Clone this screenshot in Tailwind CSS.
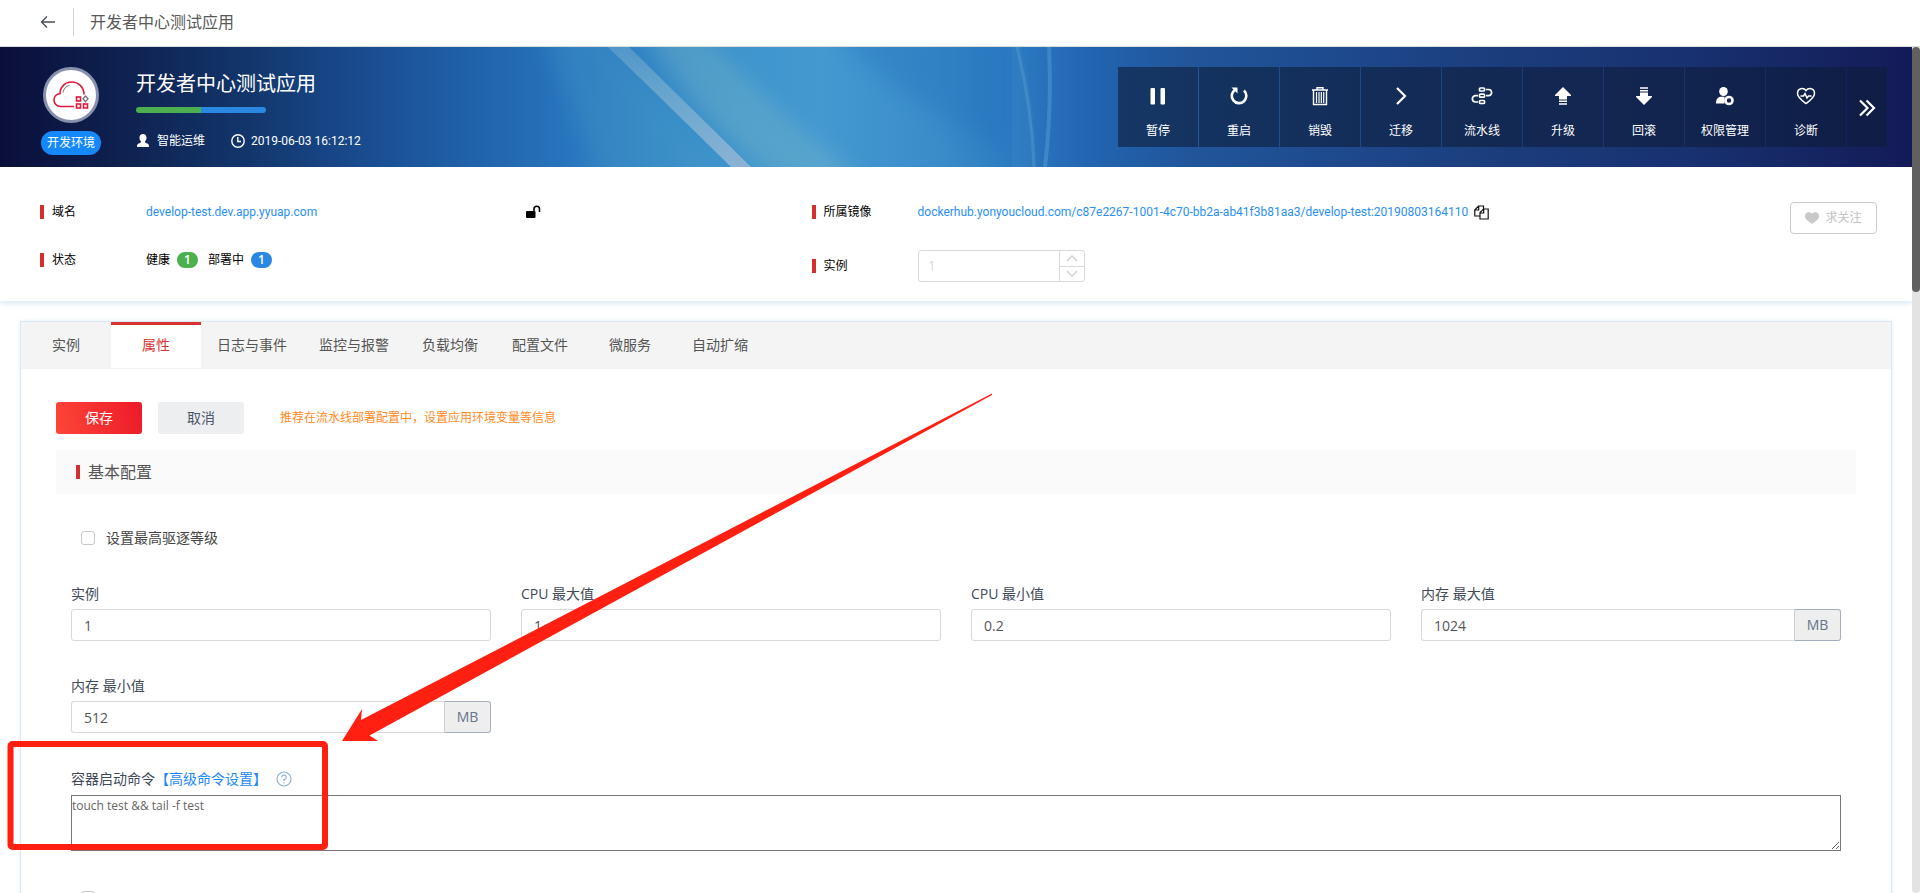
<!DOCTYPE html>
<html lang="zh-CN">
<head>
<meta charset="utf-8">
<meta name="viewport" content="width=device-width, initial-scale=1">
<title>开发者中心测试应用</title>
<script src="https://cdn.jsdelivr.net/npm/@tailwindcss/browser@4"></script>
</head>
<body class="h-screen overflow-hidden flex flex-col bg-white text-xs text-black font-['Open_Sans','Noto_Sans_CJK_SC',sans-serif]">

<header class="h-[47px] shrink-0 flex items-center pb-[2px] border-b border-[#dcdcdc] bg-white">
  <button type="button" aria-label="返回" class="ml-10 w-4 h-4">
    <svg viewBox="0 0 16 16" class="w-4 h-4" fill="none" stroke="#4a4f57" stroke-width="1.4"><path d="M15 8H1.5M7 2.5L1.5 8L7 13.5"/></svg>
  </button>
  <div class="ml-[17px] w-px h-7 bg-[#d4d4d4]"></div>
  <h1 class="ml-4 text-base leading-6 text-[#595959]">开发者中心测试应用</h1>
</header>

<div class="flex-1 min-h-0 flex">
<main class="flex-1 min-w-0 overflow-hidden relative">

  <!-- Application banner -->
  <section class="relative h-[120px] text-white bg-[linear-gradient(90deg,#0a0f3a_0%,#0f2352_7%,#12366b_13%,#18488a_18%,#1f5fa8_24%,#2876be_30%,#3489c7_35%,#3f95cd_39%,#4499d1_43%,#3a8cc9_49%,#2d7bc2_53%,#2264b0_57%,#21569b_62%,#1e4b8f_69%,#1b3c7b_79%,#18306f_89%,#131b57_100%)]">
    <svg class="absolute inset-0 w-full h-full" viewBox="0 0 1912 120" preserveAspectRatio="none" aria-hidden="true">
      <defs>
        <linearGradient id="beam" x1="0" y1="0" x2="0" y2="1"><stop offset="0" stop-color="#9cc7d6" stop-opacity=".3"/><stop offset="1" stop-color="#a9bfd8" stop-opacity=".7"/></linearGradient>
        <filter id="soft" x="-30%" y="-50%" width="160%" height="200%"><feGaussianBlur stdDeviation="10"/></filter>
      </defs>
      <path d="M540 -20H600L740 140H600Z" fill="#5aa9c8" opacity=".2" filter="url(#soft)"/>
      <path d="M640 -20H700C760 50 800 80 870 140H790C720 90 690 60 640 -20Z" fill="#86bfc6" opacity=".3" filter="url(#soft)"/>
      <path d="M830 -20H1012V110C950 75 890 45 830 -20Z" fill="#1c6cba" opacity=".3" filter="url(#soft)"/>
      <path d="M608 0H629Q688 58 751 120H731Q668 58 608 0Z" fill="url(#beam)"/>
      <path d="M1012 0H1022Q1034 60 1037 120H1012Z" fill="#58a0cc" opacity=".12"/>
      <path d="M1017 0Q1032 60 1034 120" stroke="#5aa2d0" stroke-opacity=".4" stroke-width="3" fill="none"/>
      <path d="M1049 0Q1052 60 1045 120" stroke="#5c9fd6" stroke-opacity=".45" stroke-width="4" fill="none"/>
    </svg>
    <div class="relative h-full flex">
      <div class="ml-[41px] pt-5 w-[60px] flex flex-col items-center gap-2">
        <div class="w-14 h-14 rounded-full border-[3px] border-[#8791ad] bg-white flex items-center justify-center">
          <svg viewBox="0 0 36 36" class="w-9 h-9" fill="none" stroke="#e4173c" stroke-width="1.6">
            <path d="M21 29.5H7.5C3.5 29.500 1 26.500 1 23C1 19.500 3.500 17 7 16.800C7 10 12 5 18.500 5C26 5 31 10.500 31 17.500"/>
            <path d="M10 15.500C10.500 12 13 9 16.500 8.300" stroke="#777" stroke-width="1"/>
            <rect x="23.500" y="20" width="4" height="4"/><rect x="23.500" y="27" width="4" height="4"/><rect x="30.500" y="27" width="4" height="4"/>
            <path d="M32.500 19L35 21.800L32.500 24.600L30 21.800Z" stroke="#777" stroke-width="1.400"/>
          </svg>
        </div>
        <span class="w-full h-6 rounded-full bg-[#1589fa] text-center leading-6">开发环境</span>
      </div>
      <div class="ml-[35px] pt-[23px]">
        <h2 class="text-xl leading-7">开发者中心测试应用</h2>
        <div class="mt-[9px] w-[130px] h-[6px] rounded-full overflow-hidden flex"><div class="flex-1 bg-[#4caf50]"></div><div class="flex-1 bg-[#2a87e2]"></div></div>
        <div class="mt-[18px] flex items-center leading-5">
          <svg viewBox="0 0 14 14" class="w-[14px] h-[14px]" fill="#fff"><path d="M7 0C9.300 0 10.500 1.700 10.500 3.800C10.500 5.500 9.800 6.800 9 7.500C9 8.500 9.500 8.800 10.800 9.200C12.500 9.800 13 10.600 13 13H1C1 10.600 1.500 9.800 3.200 9.200C4.500 8.800 5 8.500 5 7.500C4.200 6.800 3.500 5.500 3.500 3.800C3.500 1.700 4.700 0 7 0Z"/></svg>
          <span class="ml-[7px]">智能运维</span>
          <svg viewBox="0 0 14 14" class="ml-[26px] w-[14px] h-[14px]" fill="none" stroke="#fff" stroke-width="1.400"><circle cx="7" cy="7" r="6.200"/><path d="M6.800 3V7.500H10"/></svg>
          <span class="ml-[6px] font-[Roboto,sans-serif]">2019-06-03 16:12:12</span>
        </div>
      </div>
      <nav class="ml-auto mr-[25px] mt-5 h-20 flex gap-px">
        <button type="button" class="w-20 pt-[17px] bg-[#0e1c38]/60 flex flex-col items-center gap-3 leading-[22px]"><svg viewBox="0 0 24 24" class="w-6 h-6" fill="#fff"><rect x="4.500" y="4" width="4.500" height="16.500" rx="1"/><rect x="14.500" y="4" width="4.500" height="16.500" rx="1"/></svg>暂停</button>
        <button type="button" class="w-20 pt-[17px] bg-[#0e1c38]/60 flex flex-col items-center gap-3 leading-[22px]"><svg viewBox="0 0 24 24" class="w-6 h-6" fill="none" stroke="#fff" stroke-width="2.600"><path d="M17 6.500A7.300 7.300 0 1 1 8 5.800"/><path d="M4.500 3.500H10.500V9.500Z" fill="#fff" stroke="none"/></svg>重启</button>
        <button type="button" class="w-20 pt-[17px] bg-[#0e1c38]/60 flex flex-col items-center gap-3 leading-[22px]"><svg viewBox="0 0 24 24" class="w-6 h-6" fill="none" stroke="#fff" stroke-width="1.400"><path d="M4 6H20M9 5.500V3.800H15V5.500M5.500 6V20.500H18.500V6"/><path d="M8.500 8V19M11 8V19M13.300 8V19M15.700 8V19" stroke-width="1.200"/></svg>销毁</button>
        <button type="button" class="w-20 pt-[17px] bg-[#0e1c38]/60 flex flex-col items-center gap-3 leading-[22px]"><svg viewBox="0 0 24 24" class="w-6 h-6" fill="none" stroke="#fff" stroke-width="2.200"><path d="M8 4L16 12L8 20"/></svg>迁移</button>
        <button type="button" class="w-20 pt-[17px] bg-[#0e1c38]/60 flex flex-col items-center gap-3 leading-[22px]"><svg viewBox="0 0 24 24" class="w-6 h-6" fill="none" stroke="#fff" stroke-width="1.700"><rect x="9.500" y="4" width="5" height="3" rx=".8"/><rect x="9.500" y="10.200" width="5" height="3" rx=".8"/><rect x="9.500" y="16.500" width="5" height="3" rx=".8"/><path d="M16 5.500H18.500A3 3 0 0 1 18.500 11.700H16M8 11.700H5.500A3 3 0 0 0 5.500 18H8"/></svg>流水线</button>
        <button type="button" class="w-20 pt-[17px] bg-[#0e1c38]/60 flex flex-col items-center gap-3 leading-[22px]"><svg viewBox="0 0 24 24" class="w-6 h-6" fill="#fff"><path d="M12 3L20 11V12H16V15.500H8V12H4V11Z"/><path d="M8 16.500H16V18H8ZM8 19.300H16V20.800H8Z"/></svg>升级</button>
        <button type="button" class="w-20 pt-[17px] bg-[#0e1c38]/60 flex flex-col items-center gap-3 leading-[22px]"><svg viewBox="0 0 24 24" class="w-6 h-6" fill="#fff"><path d="M12 21L20 13V12H16V8.500H8V12H4V13Z"/><path d="M8 7.500H16V6H8ZM8 4.700H16V3.200H8Z"/></svg>回滚</button>
        <button type="button" class="w-20 pt-[17px] bg-[#0e1c38]/60 flex flex-col items-center gap-3 leading-[22px]"><svg viewBox="0 0 24 24" class="w-6 h-6" fill="#fff"><ellipse cx="10.500" cy="7.500" rx="4.300" ry="4.500"/><path d="M3 19.500C3 15 5 12.800 8 12.800H11.500V19.500Z"/><circle cx="16" cy="16.500" r="3.500" fill="none" stroke="#fff" stroke-width="2.600"/></svg>权限管理</button>
        <button type="button" class="w-20 pt-[17px] bg-[#0e1c38]/60 flex flex-col items-center gap-3 leading-[22px]"><svg viewBox="0 0 24 24" class="w-6 h-6" fill="none" stroke="#fff" stroke-width="1.500"><path d="M12 6.500C9.500 3.300 3.500 4 3.500 9.500C3.500 13.500 8 16.500 12 19.500C16 16.500 20.500 13.500 20.500 9.500C20.500 4 14.500 3.300 12 6.500Z"/><path d="M6.500 12H9.500L11 9.500L13 14L14.500 12H17.500"/></svg>诊断</button>
        <button type="button" aria-label="更多" class="w-10 pt-[2px] bg-[#0e1c38]/60 flex items-center justify-center"><svg viewBox="0 0 18 18" class="w-[18px] h-[18px]" fill="none" stroke="#fff" stroke-width="2.200"><path d="M2 1.500L9.500 9L2 16.500M8.500 1.500L16 9L8.500 16.500"/></svg></button>
      </nav>
    </div>
  </section>

  <!-- Summary -->
  <section class="h-[134px] flex items-start pl-10 pr-[35px] pt-[35px] shadow-[0_2px_6px_#d5e3f2] leading-5">
    <div class="w-[42%] flex flex-col gap-7">
      <div class="flex items-center">
        <span class="w-1 h-[14px] bg-[#d32f2f]"></span><span class="ml-2 w-[94px]">域名</span>
        <a href="#" class="w-[380px] text-[#2a8ff2] font-[Roboto,sans-serif]">develop-test.dev.app.yyuap.com</a>
        <svg viewBox="0 0 15 14" class="w-[15px] h-[14px]"><rect y="6" width="9.500" height="7" rx="1"/><path d="M8 6.500V4A2.700 2.700 0 0 1 13.500 4V7" fill="none" stroke="#000" stroke-width="1.600"/></svg>
      </div>
      <div class="flex items-center">
        <span class="w-1 h-[14px] bg-[#d32f2f]"></span><span class="ml-2 w-[94px]">状态</span>
        <span>健康</span><span class="ml-[7px] w-[21px] h-4 rounded-full bg-[#4caf50] text-white text-center font-semibold leading-4">1</span>
        <span class="ml-[10px]">部署中</span><span class="ml-[7px] w-[21px] h-4 rounded-full bg-[#2a87e2] text-white text-center font-semibold leading-4">1</span>
      </div>
    </div>
    <div class="flex-1 flex flex-col gap-7">
      <div class="flex items-center">
        <span class="w-1 h-[14px] bg-[#d32f2f]"></span><span class="ml-2 w-[94px]">所属镜像</span>
        <a href="#" class="text-[#2a8ff2] font-[Roboto,sans-serif]">dockerhub.yonyoucloud.com/c87e2267-1001-4c70-bb2a-ab41f3b81aa3/develop-test:20190803164110</a>
        <svg viewBox="0 0 15 15" class="ml-[6px] w-[15px] h-[15px]" fill="none" stroke="#111" stroke-width="1.200"><path d="M6 11H.8V5L4.500 1H9.500V4M4.700 1V5H1M6 14V7.500L9.500 4H14.200V14ZM9.700 4V8H6"/></svg>
      </div>
      <div class="flex items-center">
        <span class="w-1 h-[14px] bg-[#d32f2f]"></span><label for="replicas" class="ml-2 w-[94px]">实例</label>
        <div class="w-[167px] h-8 flex border border-[#d9d9d9] rounded-[3px]">
          <input id="replicas" type="text" value="1" disabled class="flex-1 min-w-0 px-[10px] text-[#d5d5d5]">
          <div class="w-[25px] flex flex-col border-l border-[#d9d9d9] text-[#d0d0d0]">
            <button type="button" disabled aria-label="增加" class="flex-1 flex items-center justify-center border-b border-[#d9d9d9]"><svg viewBox="0 0 12 7" class="w-3 h-[7px]" fill="none" stroke="currentColor" stroke-width="1.300"><path d="M1 6L6 1L11 6"/></svg></button>
            <button type="button" disabled aria-label="减少" class="flex-1 flex items-center justify-center"><svg viewBox="0 0 12 7" class="w-3 h-[7px]" fill="none" stroke="currentColor" stroke-width="1.300"><path d="M1 1L6 6L11 1"/></svg></button>
          </div>
        </div>
      </div>
    </div>
    <button type="button" class="w-[87px] h-8 flex items-center justify-center gap-[6px] border border-[#cbcbcb] rounded text-[#c2c2c2]">
      <svg viewBox="0 0 14 12" class="w-[14px] h-3" fill="#c8c8c8"><path d="M7 1.800C5.500-.6 0-.5 0 4C0 7.500 4 9.500 7 12C10 9.500 14 7.500 14 4C14-.5 8.500-.6 7 1.800Z"/></svg>求关注
    </button>
  </section>

  <!-- Tabs and settings -->
  <section class="mt-5 mx-5 border border-[#dbe8f3] shadow-[0_0_4px_#e2ecf6] text-sm leading-5">
    <nav class="h-[47px] bg-[#f4f4f4] flex text-[#555] pb-px">
      <a href="#" class="min-w-[90px] px-4 flex items-center justify-center">实例</a>
      <a href="#" aria-current="page" class="min-w-[90px] px-4 pb-[3px] flex items-center justify-center border-t-[3px] border-[#d93232] bg-white text-[#d93232]">属性</a>
      <a href="#" class="min-w-[90px] px-4 flex items-center justify-center">日志与事件</a>
      <a href="#" class="min-w-[90px] px-4 flex items-center justify-center">监控与报警</a>
      <a href="#" class="min-w-[90px] px-4 flex items-center justify-center">负载均衡</a>
      <a href="#" class="min-w-[90px] px-4 flex items-center justify-center">配置文件</a>
      <a href="#" class="min-w-[90px] px-4 flex items-center justify-center">微服务</a>
      <a href="#" class="min-w-[90px] px-4 flex items-center justify-center">自动扩缩</a>
    </nav>
    <form class="px-[35px] pt-[33px]">
      <div class="flex items-center">
        <button type="button" class="w-[86px] h-8 rounded-[3px] bg-[linear-gradient(75deg,#fd4637,#ec1a2a)] text-white">保存</button>
        <button type="button" class="ml-4 w-[86px] h-8 rounded-[3px] bg-[#eceef0] text-[#4d566b]">取消</button>
        <span class="ml-9 text-xs text-[#ff8a1c]">推荐在流水线部署配置中，设置应用环境变量等信息</span>
      </div>
      <div class="mt-4 h-11 px-5 flex items-center gap-2 bg-[#fafafa]">
        <span class="w-1 h-[14px] bg-[#d32f2f]"></span><h3 class="text-base leading-6 text-[#555]">基本配置</h3>
      </div>
      <div class="mt-[34px] pl-[25px] flex items-center gap-[11px]">
        <input id="evict" type="checkbox" class="appearance-none w-[14px] h-[14px] border border-[#c8c8c8] rounded-[3px] bg-white">
        <label for="evict" class="text-[#444]">设置最高驱逐等级</label>
      </div>
      <div class="mt-9 px-[15px] grid grid-cols-4 gap-x-[30px] gap-y-[35px] text-[#424a59]">
        <div><label for="inst" class="block">实例</label><input id="inst" type="text" value="1" class="mt-[5px] w-full h-8 px-3 border border-[#d9d9d9] rounded-[3px] text-[#555]"></div>
        <div><label for="cpumax" class="block">CPU 最大值</label><input id="cpumax" type="text" value="1" class="mt-[5px] w-full h-8 px-3 border border-[#d9d9d9] rounded-[3px] text-[#555]"></div>
        <div><label for="cpumin" class="block">CPU 最小值</label><input id="cpumin" type="text" value="0.2" class="mt-[5px] w-full h-8 px-3 border border-[#d9d9d9] rounded-[3px] text-[#555]"></div>
        <div><label for="memmax" class="block">内存 最大值</label><div class="mt-[5px] flex"><input id="memmax" type="text" value="1024" class="flex-1 min-w-0 h-8 px-3 border border-r-0 border-[#d9d9d9] rounded-l-[3px] text-[#555]"><span class="w-[47px] h-8 flex items-center justify-center border border-[#a5afbf] border-l-[#d0d0d0] rounded-r-[3px] bg-[#eee] text-[#66738a]">MB</span></div></div>
        <div><label for="memmin" class="block">内存 最小值</label><div class="mt-[5px] flex"><input id="memmin" type="text" value="512" class="flex-1 min-w-0 h-8 px-3 border border-r-0 border-[#d9d9d9] rounded-l-[3px] text-[#555]"><span class="w-[47px] h-8 flex items-center justify-center border border-[#a5afbf] border-l-[#d0d0d0] rounded-r-[3px] bg-[#eee] text-[#66738a]">MB</span></div></div>
      </div>
      <div class="mt-9 px-[15px] text-[#424a59]">
        <div class="flex items-center">
          <label for="cmd">容器启动命令</label><a href="#" class="text-[#1e88f5]">【高级命令设置】</a>
          <svg viewBox="0 0 16 16" class="ml-[9px] w-4 h-4" fill="none" stroke="#8fb0d2" stroke-width="1.200"><circle cx="8" cy="8" r="7"/><path d="M5.800 6.500A2.200 2.200 0 1 1 8 8.500V10"/><path d="M8 11.200V12.400"/></svg>
        </div>
        <textarea id="cmd" class="mt-[6px] block w-full h-14 border border-[#767676] text-xs leading-5 text-[#666] resize">touch test &amp;&amp; tail -f test</textarea>
      </div>
      <div class="mt-10 pl-[25px] h-20 flex items-start">
        <input type="checkbox" aria-label="启用选项" class="appearance-none w-[14px] h-[14px] border border-[#c8c8c8] rounded-[3px] bg-white">
      </div>
    </form>
  </section>

  <!-- Annotation over the form -->
  <svg class="absolute left-0 top-0 w-[1000px] h-[810px] pointer-events-none" viewBox="0 47 1000 810" aria-hidden="true">
    <rect x="10.500" y="744" width="314.500" height="103" rx="2" fill="none" stroke="#ff2012" stroke-width="6"/>
    <path d="M342 741L362 709L361 720L992 393.500L992 395L369.500 735.500L378 741Z" fill="#ff2012"/>
  </svg>
</main>
<div class="w-2 shrink-0 bg-[#e3e3e3] rounded-b-full"><div class="h-[29%] rounded-full bg-[#606060]"></div></div>
</div>
</body>
</html>
